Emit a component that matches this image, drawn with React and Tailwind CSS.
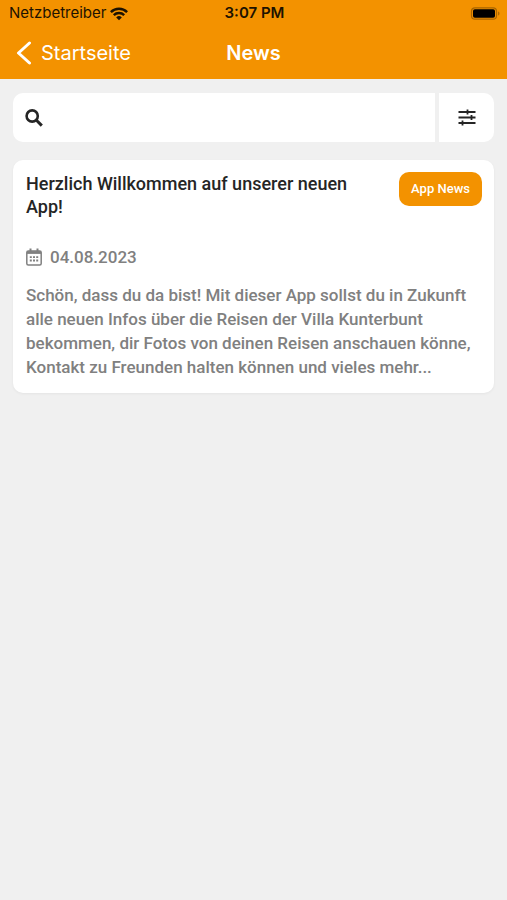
import React from "react";

function WifiIcon() {
  return (
    <svg className="h-[14px] w-[18px]" viewBox="0 0 18 14" fill="none" stroke="currentColor" aria-hidden="true">
      <path d="M0.9 5.1a11.6 11.6 0 0 1 16.2 0" strokeWidth="2.5" />
      <path d="M3.8 8.2a7.4 7.4 0 0 1 10.4 0" strokeWidth="2.4" />
      <path d="M9 13.2 6.2 10.4a4 4 0 0 1 5.6 0Z" fill="currentColor" stroke="none" />
    </svg>
  );
}

function BatteryIcon() {
  return (
    <svg className="h-[14px] w-[30px]" viewBox="0 0 30 14" aria-hidden="true">
      <rect x="1.500" y="0.800" width="25" height="11.400" rx="3.500" fill="none" stroke="#a86500" strokeWidth="1.200" />
      <rect x="3" y="2.300" width="22" height="8.400" rx="1.800" fill="#000" />
      <path d="M28 4.500v4c1-.3 1.500-1.100 1.500-2s-.5-1.700-1.500-2Z" fill="#b06a00" />
    </svg>
  );
}

function SearchIcon() {
  return (
    <svg className="h-[18px] w-[18px] shrink-0" viewBox="0 0 18 18" fill="none" stroke="#252525" aria-hidden="true">
      <circle cx="7.200" cy="7" r="5.600" strokeWidth="2.600" />
      <path d="m11.200 11 5.600 5.600" strokeWidth="3" />
    </svg>
  );
}

function FilterIcon() {
  return (
    <svg className="h-[18px] w-[18px]" viewBox="0 0 18 18" fill="none" stroke="#252525" aria-hidden="true">
      <path d="M0.500 3h17M0.500 8.500h17M0.500 14h17" strokeWidth="2" />
      <path d="M9.500 0.500v5M13.500 6v5M4.500 11.500v5" strokeWidth="1.800" />
    </svg>
  );
}

function CalendarIcon() {
  return (
    <svg className="h-[18px] w-[16px] shrink-0" viewBox="0 0 16 18" fill="none" stroke="currentColor" aria-hidden="true">
      <rect x="0.800" y="3" width="14.400" height="14" rx="1.500" strokeWidth="1.500" />
      <path d="M1 4.500h14" strokeWidth="2.800" />
      <path d="M4.500 0.500v3M11.500 0.500v3" strokeWidth="2" />
      <path d="M3.800 9.200h2M7 9.200h2M10.200 9.200h2M3.800 12.500h2M7 12.500h2M10.200 12.500h2" strokeWidth="1.800" />
    </svg>
  );
}

function StatusBar() {
  return (
    <div className="grid h-[27px] grid-cols-[1fr_auto_1fr] items-center pr-[7px] pl-[9px] text-[15px] text-[#1d1200]">
      <div className="flex items-center gap-1">
        <span>Netzbetreiber</span>
        <WifiIcon />
      </div>
      <span className="font-semibold">3:07 PM</span>
      <div className="flex justify-end">
        <BatteryIcon />
      </div>
    </div>
  );
}

function NavBar() {
  return (
    <nav className="grid h-[52px] grid-cols-[1fr_auto_1fr] items-center px-4 text-white">
      <a href="#startseite" className="flex items-center gap-[9px] text-[20px]">
        <svg className="h-6 w-4" viewBox="0 0 16 24" fill="none" stroke="currentColor" strokeWidth="3" strokeLinecap="round" strokeLinejoin="round" aria-hidden="true">
          <path d="M13.500 2 2.500 12l11 10" />
        </svg>
        Startseite
      </a>
      <h1 className="text-[20px] font-semibold">News</h1>
    </nav>
  );
}

function NewsCard() {
  return (
    <article className="rounded-[10px] bg-white px-3 pt-3 pb-[14px] pl-[13px] font-['Roboto',sans-serif] font-medium shadow-[0_1px_3px_rgba(0,0,0,0.05)]">
      <div className="flex items-start justify-between gap-4">
        <h2 className="max-w-[350px] text-[18px] leading-[23px] text-[#252525]">
          Herzlich Willkommen auf unserer neuen App!
        </h2>
        <span className="shrink-0 rounded-[10px] bg-[#f39200] px-3 text-[13px] leading-[34px] text-white">
          App News
        </span>
      </div>
      <div className="mt-[27px] flex items-center gap-2 text-[17px] leading-6 text-[#808080]">
        <CalendarIcon />
        <time dateTime="2023-08-04">04.08.2023</time>
      </div>
      <p className="mt-[14px] text-[17px] leading-6 text-[#808080]">
        Schön, dass du da bist! Mit dieser App sollst du in Zukunft alle neuen Infos über die Reisen der Villa
        Kunterbunt bekommen, dir Fotos von deinen Reisen anschauen könne, Kontakt zu Freunden halten können und vieles
        mehr...
      </p>
    </article>
  );
}

export default function App() {
  return (
    <div className="min-h-screen bg-[#f0f0f0] font-['Inter',sans-serif]">
      <header className="bg-[#f39200]">
        <StatusBar />
        <NavBar />
      </header>
      <main className="flex flex-col gap-[18px] px-[13px] py-[14px]">
        <form className="flex h-[49px] gap-1" role="search">
          <label className="flex flex-1 items-center gap-2 rounded-l-[10px] bg-white px-3">
            <SearchIcon />
            <input type="search" aria-label="Suche" className="h-full w-full min-w-0 bg-transparent text-[17px] outline-none" />
          </label>
          <button type="button" aria-label="Filter" className="flex w-[55px] items-center justify-center rounded-r-[10px] bg-white">
            <FilterIcon />
          </button>
        </form>
        <NewsCard />
      </main>
    </div>
  );
}
